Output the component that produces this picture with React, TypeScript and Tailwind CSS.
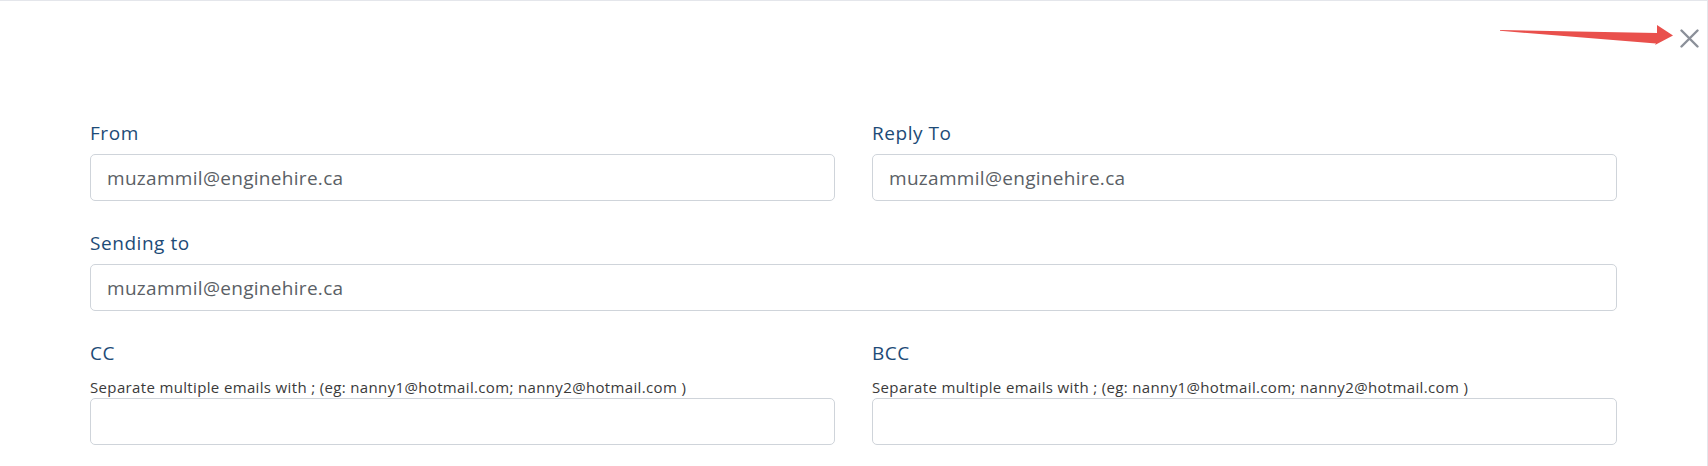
import React from "react";

const font = { fontFamily: '"Open Sans", "Noto Sans", sans-serif' };

function Label({ children }: { children: React.ReactNode }) {
  return (
    <label className="block text-[19px] leading-[24px] font-medium tracking-[0.55px] text-[#1d4b77]">
      {children}
    </label>
  );
}

function Field({
  label,
  value,
  hint,
  className = "",
}: {
  label: string;
  value?: string;
  hint?: string;
  className?: string;
}) {
  return (
    <div className={className}>
      <Label>{label}</Label>
      {hint ? (
        <p className="mt-[12px] text-[15px] leading-[21px] tracking-[0.35px] text-[#3a3a3a]">
          {hint}
        </p>
      ) : (
        <div className="h-[9px]" />
      )}
      <input
        readOnly
        defaultValue={value}
        className="block w-full h-[47px] rounded-[5px] border border-[#cfd4da] bg-white px-4 text-[19px] tracking-[0.3px] text-[#5b5f66] outline-none"
        style={font}
      />
    </div>
  );
}

export default function App() {
  const hint =
    "Separate multiple emails with ; (eg: nanny1@hotmail.com; nanny2@hotmail.com )";

  return (
    <div
      className="w-full h-[466px] bg-white border-t border-r border-[#e4e6eb] overflow-hidden"
      style={font}
    >
      <div className="relative flex justify-end h-[120px] pt-[27px] pr-[8px]">
        {/* red annotation arrow pointing at the close button */}
        <svg
          className="absolute left-[1495px] top-[19px]"
          width="185"
          height="30"
          viewBox="0 0 185 30"
        >
          <polygon
            points="5,10 162,13 162,5 178,15.5 160,25 161,23.5 5,10.8"
            fill="#e9504c"
          />
        </svg>
        <button className="w-[20px] h-[20px] flex items-center justify-center">
          <svg width="19" height="19" viewBox="0 0 19 19">
            <path
              d="M1.5 1.5 L17.5 17.5 M17.5 1.5 L1.5 17.5"
              stroke="#8b9099"
              strokeWidth="2.4"
              strokeLinecap="round"
            />
          </svg>
        </button>
      </div>

      <div className="pl-[90px] w-[1617px]">
        <div className="grid grid-cols-2 gap-x-[37px]">
          <Field label="From" value="muzammil@enginehire.ca" />
          <Field label="Reply To" value="muzammil@enginehire.ca" />
          <Field
            label="Sending to"
            value="muzammil@enginehire.ca"
            className="col-span-2 mt-[30px]"
          />
          <Field label="CC" hint={hint} className="mt-[30px]" />
          <Field label="BCC" hint={hint} className="mt-[30px]" />
        </div>
      </div>
    </div>
  );
}
